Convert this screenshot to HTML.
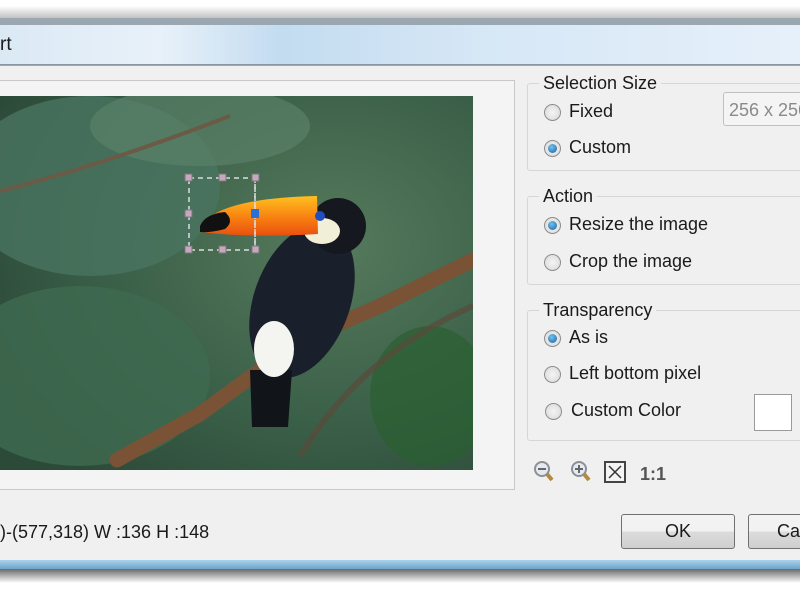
<!DOCTYPE html>
<html><head><style>
*{margin:0;padding:0;box-sizing:border-box}
body{width:800px;height:600px;overflow:hidden;background:#fff;font-family:"Liberation Sans",sans-serif;position:relative}
.abs{position:absolute}
.win{left:0;top:18px;width:800px;height:552px;background:#9aa6b0}
.title{left:0;top:25px;width:800px;height:40px;background:linear-gradient(90deg,#dbe9f5,#e8f1f9 20%,#c3dcf0 35%,#d6e7f6 60%,#e6f0fa 100%);border-bottom:1px solid #8a97a3}
.body{left:0;top:66px;width:800px;height:494px;background:#f0f0f0}
.bot{left:0;top:560px;width:800px;height:9px;background:linear-gradient(#a9d2ee,#6fa3c8)}
.t{font-size:18px;color:#1a1a1a;position:absolute;white-space:nowrap}
.grp{position:absolute;border:1px solid #d6d6d6;border-radius:3px;left:527px;width:290px}
.radio{position:absolute;width:17px;height:17px;border-radius:50%;border:1px solid #8d8d8d;background:radial-gradient(circle,#f4f4f4,#d8d8d8)}
.radio.on::after{content:"";position:absolute;left:3px;top:3px;width:9px;height:9px;border-radius:50%;background:radial-gradient(circle at 40% 35%,#6fc3f0,#1c5f9e)}
.btn{position:absolute;border:1px solid #707070;border-radius:3px;background:linear-gradient(#f2f2f2 50%,#dcdcdc 50%,#cfcfcf);font-size:18px;text-align:center;line-height:33px;color:#1a1a1a}
</style></head><body>
<div class="abs" style="left:0;top:6px;width:800px;height:14px;background:linear-gradient(#fff,#b8b8b8)"></div>
<div class="abs win"></div>
<div class="abs title"></div>
<div class="t" style="left:0;top:34px;font-size:19px">rt</div>
<div class="abs body"></div>
<div class="abs bot"></div>
<div class="abs" style="left:0;top:569px;width:800px;height:14px;background:linear-gradient(#6a6a6a,#fff)"></div>

<div class="abs" style="left:-2px;top:80px;width:517px;height:410px;border:1px solid #c8c8c8;background:#f4f4f4"></div>
<svg class="abs" style="left:0;top:96px" width="473" height="374" viewBox="0 0 473 374">
<defs>
<radialGradient id="bg" cx="0.7" cy="0.4" r="0.8"><stop offset="0" stop-color="#557a5c"/><stop offset="0.6" stop-color="#3a5f48"/><stop offset="1" stop-color="#2c4a38"/></radialGradient>
<linearGradient id="bk" x1="0" y1="0" x2="0" y2="1"><stop offset="0" stop-color="#ffc020"/><stop offset="0.6" stop-color="#f77a10"/><stop offset="1" stop-color="#e85010"/></linearGradient>
</defs>
<rect width="473" height="374" fill="url(#bg)"/>
<ellipse cx="90" cy="90" rx="130" ry="90" fill="#4a7460" opacity=".8"/>
<ellipse cx="80" cy="280" rx="130" ry="90" fill="#3f6a50" opacity=".8"/>
<ellipse cx="200" cy="30" rx="110" ry="40" fill="#5a8068" opacity=".7"/>
<ellipse cx="430" cy="300" rx="60" ry="70" fill="#2a6030" opacity=".7"/>
<path d="M0 95 Q100 70 230 20" stroke="#6b5a45" stroke-width="4" fill="none"/>
<path d="M300 360 Q360 260 473 210" stroke="#5a4a3a" stroke-width="6" fill="none" opacity=".7"/>
<path d="M117 364 L200 318 L300 245 L380 210 L473 164" stroke="#7a5236" stroke-width="15" stroke-linecap="round" fill="none"/>
<ellipse cx="302" cy="205" rx="48" ry="80" fill="#1a1f2c" transform="rotate(20 302 205)"/>
<path d="M250 274 L292 274 L288 331 L252 331 Z" fill="#111418"/>
<ellipse cx="274" cy="253" rx="20" ry="28" fill="#f4f4f0"/>
<circle cx="338" cy="130" r="28" fill="#15181f"/>
<ellipse cx="322" cy="135" rx="18" ry="13" fill="#f2efd8"/>
<path d="M200 130 Q220 102 317 100 L318 138 Q250 142 200 136 Z" fill="url(#bk)"/>
<path d="M200 130 Q205 118 225 116 Q235 125 225 133 Q210 137 200 136 Z" fill="#111"/>
<circle cx="320" cy="120" r="5" fill="#2050c0"/>
<g stroke="#ddd" stroke-width="1.5" stroke-dasharray="5 4" fill="none"><rect x="189" y="82" width="66" height="72"/><line x1="255" y1="82" x2="255" y2="154"/></g>
<g fill="#c8a8c0" stroke="#777"><rect x="185" y="78" width="7" height="7"/><rect x="219" y="78" width="7" height="7"/><rect x="252" y="78" width="7" height="7"/><rect x="185" y="114" width="7" height="7"/><rect x="185" y="150" width="7" height="7"/><rect x="219" y="150" width="7" height="7"/><rect x="252" y="150" width="7" height="7"/></g>
<rect x="251" y="113" width="8" height="9" fill="#2b6fd8"/>
</svg>

<div class="grp" style="top:83px;height:88px"></div>
<div class="t" style="left:539px;top:73px;background:#f0f0f0;padding:0 4px">Selection Size</div>
<div class="radio" style="left:544px;top:104px"></div><div class="t" style="left:569px;top:101px">Fixed</div>
<div class="abs" style="left:723px;top:92px;width:90px;height:34px;border:1px solid #c0c0c0;border-radius:3px;background:#f4f4f4"></div>
<div class="t" style="left:729px;top:100px;color:#8a8a8a">256 x 256</div>
<div class="radio on" style="left:544px;top:140px"></div><div class="t" style="left:569px;top:137px">Custom</div>

<div class="grp" style="top:196px;height:89px"></div>
<div class="t" style="left:539px;top:186px;background:#f0f0f0;padding:0 4px">Action</div>
<div class="radio on" style="left:544px;top:217px"></div><div class="t" style="left:569px;top:214px">Resize the image</div>
<div class="radio" style="left:544px;top:254px"></div><div class="t" style="left:569px;top:251px">Crop the image</div>

<div class="grp" style="top:310px;height:131px"></div>
<div class="t" style="left:539px;top:300px;background:#f0f0f0;padding:0 4px">Transparency</div>
<div class="radio on" style="left:544px;top:330px"></div><div class="t" style="left:569px;top:327px">As is</div>
<div class="radio" style="left:544px;top:366px"></div><div class="t" style="left:569px;top:363px">Left bottom pixel</div>
<div class="radio" style="left:545px;top:403px"></div><div class="t" style="left:571px;top:400px">Custom Color</div>
<div class="abs" style="left:754px;top:394px;width:38px;height:37px;border:1px solid #9a9a9a;background:#fff"></div>

<svg class="abs" style="left:530px;top:458px" width="140" height="30">
<g><circle cx="12" cy="11" r="7" fill="#e4eaf0" stroke="#8a9098" stroke-width="2"/><line x1="8" y1="11" x2="16" y2="11" stroke="#666" stroke-width="2"/><line x1="17" y1="16" x2="22" y2="22" stroke="#b08a40" stroke-width="4"/></g>
<g transform="translate(37,0)"><circle cx="12" cy="11" r="7" fill="#e4eaf0" stroke="#8a9098" stroke-width="2"/><line x1="8" y1="11" x2="16" y2="11" stroke="#666" stroke-width="2"/><line x1="12" y1="7" x2="12" y2="15" stroke="#666" stroke-width="2"/><line x1="17" y1="16" x2="22" y2="22" stroke="#b08a40" stroke-width="4"/></g>
<rect x="75" y="4" width="20" height="20" fill="#f4f4f4" stroke="#444" stroke-width="2"/>
<path d="M79 8 L91 20 M91 8 L79 20" stroke="#333" stroke-width="1.5"/>
<text x="110" y="22" font-family="Liberation Sans" font-weight="bold" font-size="18" fill="#555">1:1</text>
</svg>

<div class="t" style="left:0;top:522px">)-(577,318) W :136 H :148</div>
<div class="btn" style="left:621px;top:514px;width:114px;height:35px">OK</div>
<div class="btn" style="left:748px;top:514px;width:70px;height:35px;text-align:left;padding-left:28px">Cancel</div>
</body></html>
